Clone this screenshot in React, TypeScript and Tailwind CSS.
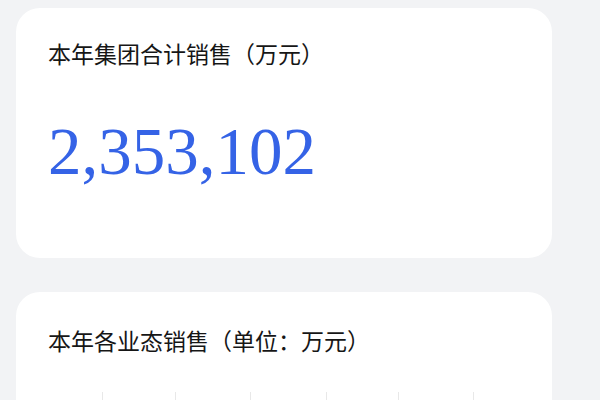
const gridX = [86, 159, 234, 310, 382, 457];

function StatCard({ title, value }: { title: string; value: string }) {
  return (
    <div className="w-[536px] h-[250px] shrink-0 rounded-3xl bg-white px-8 pt-8">
      <h2 className="text-[23px] leading-[32px] text-[#161616] font-normal">{title}</h2>
      <div
        className="mt-[46px] text-[67px] leading-[67px] text-[#3563e6]"
        style={{ fontFamily: '"Liberation Serif", serif' }}
      >
        {value}
      </div>
    </div>
  );
}

function ChartCard({ title }: { title: string }) {
  return (
    <div className="w-[536px] h-[300px] shrink-0 rounded-3xl bg-white pt-[35px]">
      <h2 className="px-8 text-[23px] leading-[32px] text-[#161616] font-normal">{title}</h2>
      {/* chart grid */}
      <svg className="mt-[33px] block" width="536" height="200">
        {gridX.map((x) => (
          <line key={x} x1={x + 0.5} y1="0" x2={x + 0.5} y2="200" stroke="#e8e8e8" strokeWidth="1" />
        ))}
      </svg>
    </div>
  );
}

export default function App() {
  return (
    <div
      className="w-[600px] h-[400px] overflow-hidden bg-[#f2f3f5] pl-4 pt-2 flex flex-col gap-[34px]"
      style={{ fontFamily: '"Liberation Serif", "Noto Sans CJK SC", serif' }}
    >
      <StatCard title="本年集团合计销售（万元）" value="2,353,102" />
      <ChartCard title="本年各业态销售（单位：万元）" />
    </div>
  );
}
